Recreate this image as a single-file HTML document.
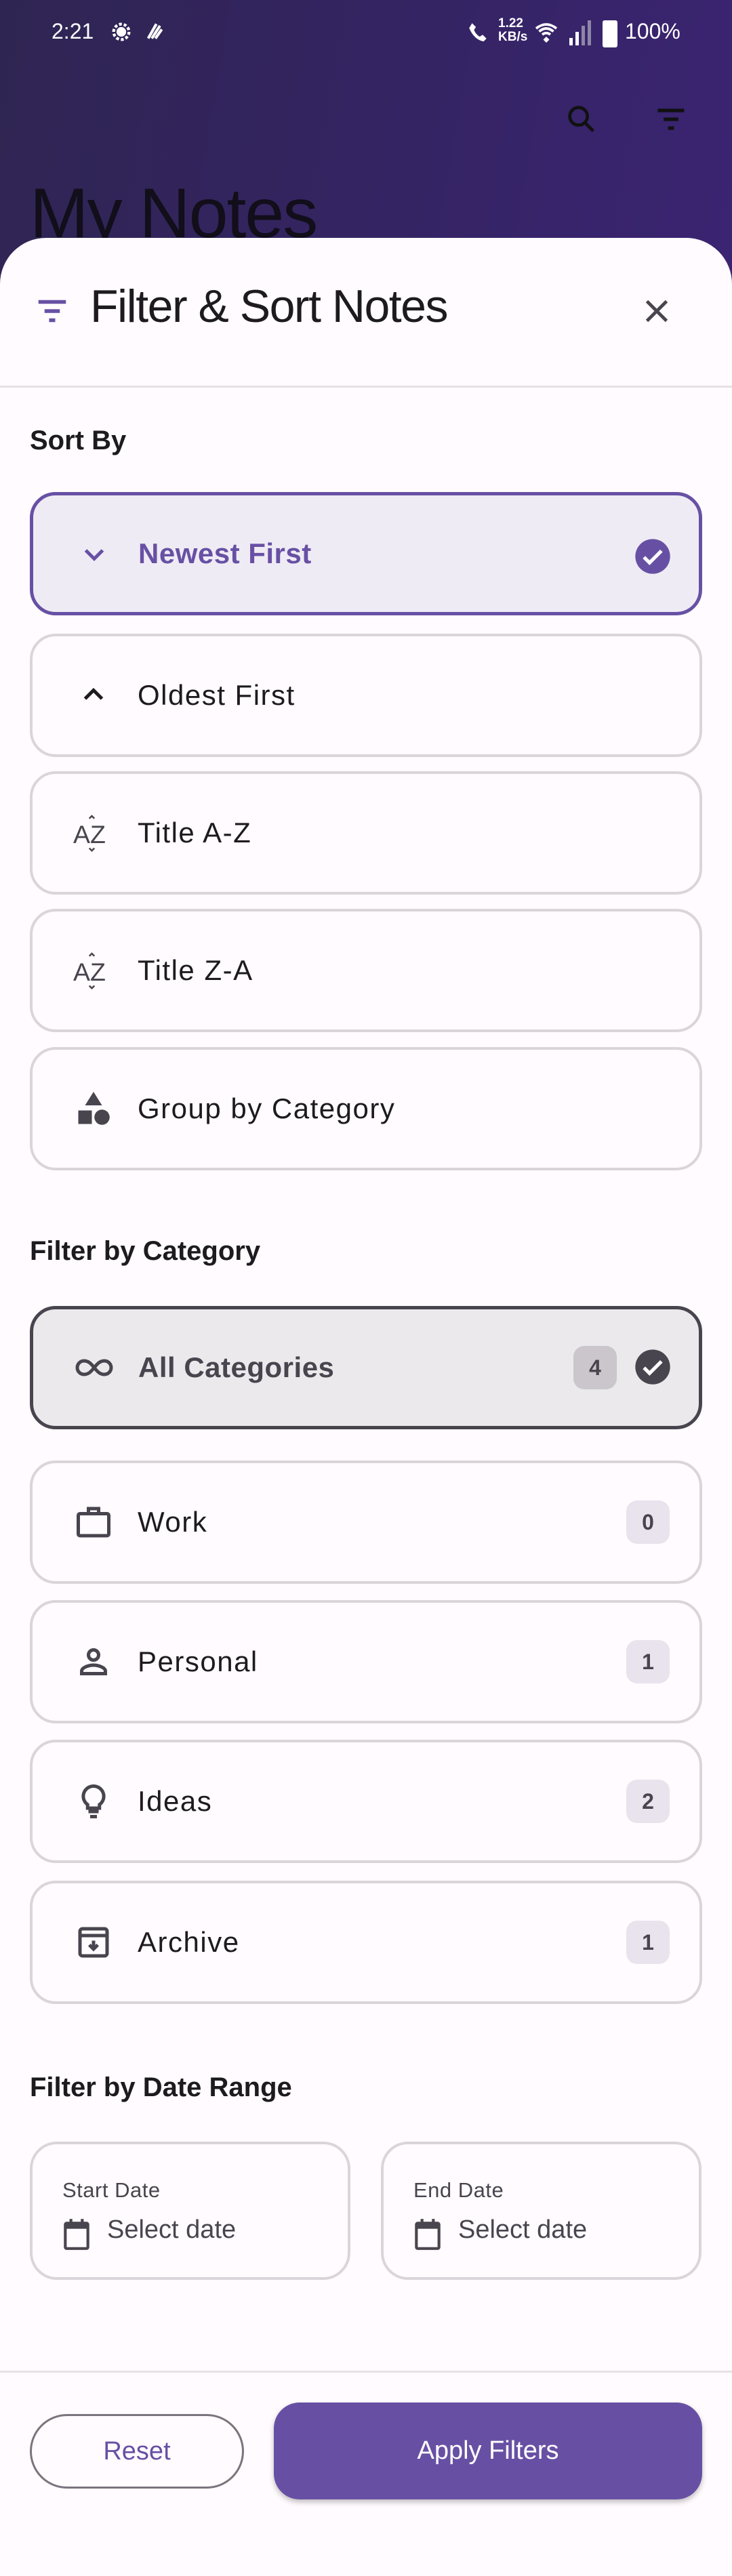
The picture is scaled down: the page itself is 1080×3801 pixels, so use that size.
<!DOCTYPE html>
<html><head><meta charset="utf-8"><style>
*{box-sizing:border-box;margin:0;padding:0}
body{width:1080px;height:3801px;overflow:hidden;font-family:"Liberation Sans",sans-serif;background:#fffbfe;position:relative}
.bg{position:absolute;left:0;top:0;width:1080px;height:420px;background:linear-gradient(100deg,#2f2552 0%,#352465 60%,#3b2472 100%)}
.status{position:absolute;top:0;left:0;width:1080px;height:100px;color:#fff}
.abs{position:absolute}
.sheet{position:absolute;left:0;top:351px;width:1080px;height:3450px;background:#fffbfe;border-radius:68px 68px 0 0}
.card{position:absolute;left:44px;width:992px;height:182px;border:4px solid #d9d5da;border-radius:38px;background:#fffbfe}
.card .ic{position:absolute;left:60px;top:50%;transform:translateY(-50%);width:60px;height:60px}
.card .t{position:absolute;left:155px;top:50%;transform:translateY(-50%);font-size:42px;color:#1d1b20;letter-spacing:1.5px}
.badge{position:absolute;right:44px;top:50%;transform:translateY(-50%);width:64px;height:64px;border-radius:16px;background:#e8e3ec;color:#49454f;font-size:32px;text-align:center;line-height:64px;font-weight:bold}
.h{position:absolute;left:44px;font-size:40px;font-weight:bold;color:#1d1b20}
.date{position:absolute;top:3160px;width:473px;height:204px;border:4px solid #d9d5da;border-radius:40px}
.date .l{position:absolute;left:44px;top:50px;font-size:31px;color:#49454f;letter-spacing:.5px}
.date .v{position:absolute;left:110px;top:105px;font-size:38px;color:#49454f}
.date svg{position:absolute;left:44px;top:108px}
</style></head><body>
<div class="bg"></div>
<div class="status">
 <div class="abs" style="left:76px;top:28px;font-size:32px">2:21</div>
 <svg class="abs" style="left:162px;top:30px" width="34" height="34" viewBox="0 0 24 24"><circle cx="12" cy="12" r="8" fill="none" stroke="#fff" stroke-width="3" stroke-dasharray="3 2"/><circle cx="12" cy="12" r="5" fill="#fff"/></svg>
 <svg class="abs" style="left:212px;top:30px" width="32" height="32" viewBox="0 0 24 24"><path d="M5 20 L14 4 M9 20 L18 6 M13 20 L20 10" stroke="#fff" stroke-width="3" fill="none"/></svg>
 <svg class="abs" style="left:688px;top:28px" width="34" height="38" viewBox="0 0 24 24"><path d="M6 3 L10 7 L8 10 Q10 15 14 17 L17 15 L21 19 L18 22 Q8 20 3 8 Z" fill="#fff"/></svg>
 <div class="abs" style="left:735px;top:25px;font-size:19px;line-height:20px;font-weight:bold">1.22<br>KB/s</div>
 <svg class="abs" style="left:788px;top:30px" width="36" height="36" viewBox="0 0 24 24"><path d="M2 8 Q12 0 22 8 M5 11 Q12 5 19 11 M8 14 Q12 11 16 14" stroke="#fff" stroke-width="2.5" fill="none"/><path d="M12 16 L15 19 L12 22 L9 19Z" fill="#fff"/></svg>
 <div class="abs" style="left:840px;top:56px;width:5px;height:11px;background:#fff"></div>
 <div class="abs" style="left:849px;top:47px;width:5px;height:20px;background:#fff"></div>
 <div class="abs" style="left:858px;top:38px;width:5px;height:29px;background:#8f86a8"></div>
 <div class="abs" style="left:867px;top:30px;width:5px;height:37px;background:#8f86a8"></div>
 <div class="abs" style="left:889px;top:30px;width:22px;height:40px;background:#fff;border-radius:3px"></div>
 <div class="abs" style="left:922px;top:28px;font-size:32px">100%</div>
</div>
<svg class="abs" style="left:832px;top:150px" width="52" height="52" viewBox="0 0 24 24"><circle cx="10" cy="10" r="6" fill="none" stroke="#111" stroke-width="2.2"/><path d="M14.5 14.5 L20 20" stroke="#111" stroke-width="2.2"/></svg>
<svg class="abs" style="left:964px;top:150px" width="52" height="52" viewBox="0 0 24 24"><path d="M3 6h18M7 12h10M10 18h4" stroke="#111" stroke-width="2.4"/></svg>
<div class="abs" style="left:44px;top:256px;font-size:104px;color:#120e1a;letter-spacing:-2px">My Notes</div>
<div class="sheet"></div>
<svg class="abs" style="left:50px;top:432px" width="54" height="54" viewBox="0 0 24 24"><path d="M3 6h18M7 12h10M10 18h4" stroke="#6750a4" stroke-width="2.4"/></svg>
<div class="abs" style="left:133px;top:413px;font-size:68px;color:#1d1b20;letter-spacing:-1.5px">Filter &amp; Sort Notes</div>
<svg class="abs" style="left:940px;top:430px" width="58" height="58" viewBox="0 0 24 24"><path d="M6 6L18 18M18 6L6 18" stroke="#49454f" stroke-width="2"/></svg>
<div class="abs" style="left:0;top:569px;width:1080px;height:3px;background:#e6e1e6"></div>

<div class="h" style="top:628px">Sort By</div>
<div class="card" style="top:726px;border:5px solid #6750a4;background:#efebf4">
 <svg class="ic" viewBox="0 0 24 24"><path d="M7 10l5 5 5-5" stroke="#6750a4" stroke-width="2" fill="none"/></svg>
 <div class="t" style="color:#6750a4;font-weight:bold;letter-spacing:0.5px">Newest First</div>
 <svg class="abs" style="right:40px;top:62px" width="56" height="56" viewBox="0 0 24 24"><circle cx="12" cy="12" r="11" fill="#6750a4"/><path d="M6.5 12.5l3.5 3.5 7.5-7.5" stroke="#fff" stroke-width="2.2" fill="none"/></svg>
</div>
<div class="card" style="top:935px"><svg class="ic" viewBox="0 0 24 24"><path d="M7 14l5-5 5 5" stroke="#1d1b20" stroke-width="2" fill="none"/></svg><div class="t">Oldest First</div></div>
<div class="card" style="top:1138px"><svg class="ic" viewBox="0 0 24 24"><text x="0" y="18" font-size="15" font-family="Liberation Sans" fill="#49454f">AZ</text><path d="M9.5 3.5l1.5-1.5 1.5 1.5M9.5 21l1.5 1.5 1.5-1.5" stroke="#49454f" fill="none"/></svg><div class="t">Title A-Z</div></div>
<div class="card" style="top:1341px"><svg class="ic" viewBox="0 0 24 24"><text x="0" y="18" font-size="15" font-family="Liberation Sans" fill="#49454f">AZ</text><path d="M9.5 3.5l1.5-1.5 1.5 1.5M9.5 21l1.5 1.5 1.5-1.5" stroke="#49454f" fill="none"/></svg><div class="t">Title Z-A</div></div>
<div class="card" style="top:1545px"><svg class="ic" viewBox="0 0 24 24"><path d="M12 2l5 8H7z" fill="#49454f"/><rect x="3" y="13" width="8" height="8" fill="#49454f"/><circle cx="17" cy="17" r="4.5" fill="#49454f"/></svg><div class="t">Group by Category</div></div>

<div class="h" style="top:1824px">Filter by Category</div>
<div class="card" style="top:1927px;border:5px solid #49454f;background:#ece9ec">
 <svg class="ic" viewBox="0 0 24 24"><path d="M12 12c-2-2.5-3.5-4-6-4a4 4 0 000 8c2.5 0 4-1.5 6-4s3.5-4 6-4a4 4 0 010 8c-2.5 0-4-1.5-6-4z" stroke="#49454f" stroke-width="2" fill="none"/></svg>
 <div class="t" style="color:#49454f;font-weight:bold;letter-spacing:0.5px">All Categories</div>
 <div class="badge" style="right:121px;background:#cac6cc">4</div>
 <svg class="abs" style="right:40px;top:57px" width="56" height="56" viewBox="0 0 24 24"><circle cx="12" cy="12" r="11" fill="#49454f"/><path d="M6.5 12.5l3.5 3.5 7.5-7.5" stroke="#fff" stroke-width="2.2" fill="none"/></svg>
</div>
<div class="card" style="top:2155px"><svg class="ic" viewBox="0 0 24 24"><rect x="3" y="7" width="18" height="13" rx="1" stroke="#49454f" stroke-width="2" fill="none"/><path d="M9 7V4h6v3" stroke="#49454f" stroke-width="2" fill="none"/></svg><div class="t">Work</div><div class="badge">0</div></div>
<div class="card" style="top:2361px"><svg class="ic" viewBox="0 0 24 24"><circle cx="12" cy="8" r="3" stroke="#49454f" stroke-width="2" fill="none"/><path d="M5 19v-1.5c0-2 4-3.5 7-3.5s7 1.5 7 3.5V19z" stroke="#49454f" stroke-width="2" fill="none"/></svg><div class="t">Personal</div><div class="badge">1</div></div>
<div class="card" style="top:2567px"><svg class="ic" viewBox="0 0 24 24"><path d="M9 18h6M10 21h4M12 3a6 6 0 00-3.5 10.9V16h7v-2.1A6 6 0 0012 3z" stroke="#49454f" stroke-width="2" fill="none"/></svg><div class="t">Ideas</div><div class="badge">2</div></div>
<div class="card" style="top:2775px"><svg class="ic" viewBox="0 0 24 24"><rect x="4" y="4" width="16" height="16" rx="1.5" stroke="#49454f" stroke-width="2" fill="none"/><path d="M4 8h16M12 11v5M9.5 13.5L12 16l2.5-2.5" stroke="#49454f" stroke-width="2" fill="none"/></svg><div class="t">Archive</div><div class="badge">1</div></div>

<div class="h" style="top:3058px">Filter by Date Range</div>
<div class="date" style="left:44px"><div class="l">Start Date</div><svg width="42" height="50" viewBox="0 0 20 24"><rect x="2" y="4" width="16" height="18" rx="1" stroke="#49454f" stroke-width="2" fill="none"/><rect x="2" y="4" width="16" height="4" fill="#49454f"/><path d="M6 1v4M14 1v4" stroke="#49454f" stroke-width="2"/></svg><div class="v">Select date</div></div>
<div class="date" style="left:562px"><div class="l">End Date</div><svg width="42" height="50" viewBox="0 0 20 24"><rect x="2" y="4" width="16" height="18" rx="1" stroke="#49454f" stroke-width="2" fill="none"/><rect x="2" y="4" width="16" height="4" fill="#49454f"/><path d="M6 1v4M14 1v4" stroke="#49454f" stroke-width="2"/></svg><div class="v">Select date</div></div>

<div class="abs" style="left:0;top:3498px;width:1080px;height:3px;background:#e6e1e6"></div>
<div class="abs" style="left:44px;top:3562px;width:316px;height:110px;border:3px solid #79747e;border-radius:55px;color:#6750a4;font-size:38px;text-align:center;line-height:104px">Reset</div>
<div class="abs" style="left:404px;top:3545px;width:632px;height:143px;background:#6750a4;border-radius:38px;color:#fff;font-size:38px;text-align:center;line-height:143px;box-shadow:0 4px 8px rgba(0,0,0,.25)">Apply Filters</div>
</body></html>
